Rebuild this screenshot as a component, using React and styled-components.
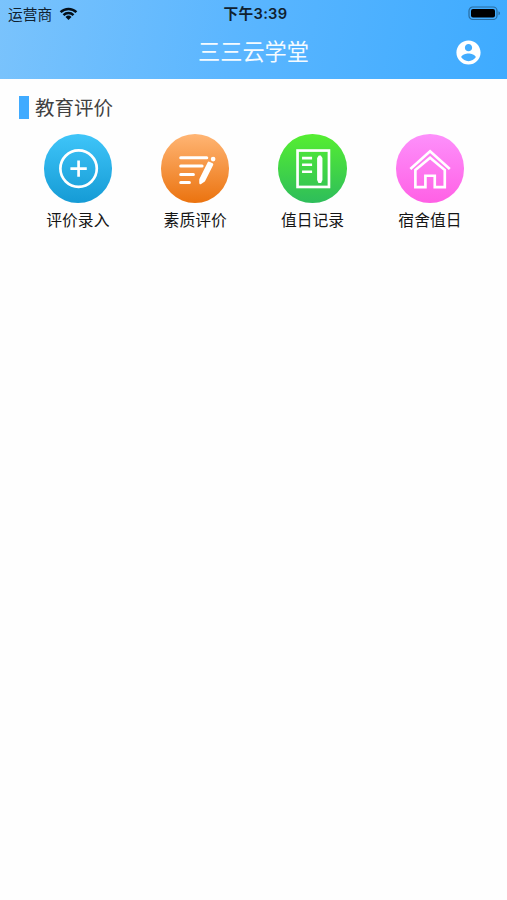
import React from 'react';
import styled, { createGlobalStyle } from 'styled-components';

const GlobalStyle = createGlobalStyle`
  * { box-sizing: border-box; }
  body {
    margin: 0;
    background: #fefefe;
    font-family: "Liberation Sans", "Noto Sans CJK SC", sans-serif;
  }
`;

const Screen = styled.main`
  width: 100%;
  height: 900px;
  overflow: hidden;
  background: #fefefe;
`;

const Header = styled.header`
  height: 79px;
  background: linear-gradient(100deg, #7ac3fc 0%, #5bb6ff 46%, #3eabff 100%);
`;

const StatusBar = styled.div`
  height: 27px;
  padding: 0 6px 0 8px;
  display: grid;
  grid-template-columns: 1fr auto 1fr;
  align-items: center;
  color: #10212f;
`;

const Carrier = styled.div`
  display: flex;
  align-items: center;
  gap: 7px;
  font: 400 14.7px/27px "Noto Sans CJK SC", sans-serif;
`;

const Clock = styled.time`
  padding: 2px 0 0 2px;
  font: 600 14.7px/25px Inter, "Noto Sans CJK SC", sans-serif;
  letter-spacing: 0.3px;
`;

const Battery = styled.svg`
  justify-self: end;
  display: block;
`;

const TitleBar = styled.div`
  height: 50px;
  padding: 0 26px;
  display: grid;
  grid-template-columns: 26px 1fr 26px;
  align-items: center;
`;

const Title = styled.h1`
  grid-column: 2;
  margin: 0;
  padding-bottom: 4px;
  text-align: center;
  color: #f5fbff;
  font: 400 22.2px/46px "Noto Sans CJK SC", sans-serif;
`;

const AccountIcon = styled.svg`
  width: 29px;
  height: 29px;
  justify-self: center;
`;

const SectionHeading = styled.h2`
  margin: 16px 0 0 19px;
  height: 24px;
  display: flex;
  align-items: center;
  gap: 6px;
  color: #414141;
  font: 400 19.5px/24px "Noto Sans CJK SC", sans-serif;

  &::before {
    content: "";
    width: 10px;
    height: 23px;
    background: #40abff;
  }
`;

const Menu = styled.nav`
  margin-top: 15px;
  padding: 0 18.4px 0 19.2px;
  display: grid;
  grid-template-columns: repeat(4, 1fr);
`;

const MenuItem = styled.div`
  display: flex;
  flex-direction: column;
  align-items: center;
`;

const Disc = styled.div`
  width: 68.5px;
  height: 68.5px;
  border-radius: 50%;
  background: linear-gradient(${(p) => p.$from}, ${(p) => p.$to});

  svg {
    display: block;
    width: 100%;
    height: 100%;
    fill: none;
    stroke: #fff;
    stroke-width: 8;
  }
`;

const Label = styled.span`
  margin-top: 5px;
  color: #151515;
  font: 400 15.8px/24px "Noto Sans CJK SC", sans-serif;
`;

const items = [
  {
    label: '评价录入', from: '#3fc5f9', to: '#159bd5',
    icon: (
      <>
        <circle cx="103.500" cy="103.500" r="54.500" />
        <path d="M79 103.500h49M103.500 79v49" />
      </>
    ),
  },
  {
    label: '素质评价', from: '#ffb574', to: '#eb730f',
    icon: (
      <>
        <path d="M59 71h78M59 96h64M59 121h38M59 145h26" strokeWidth="9" strokeLinecap="round" />
        <path d="M143 86L153 91L129 139L118 147L118 136Z" fill="#fff" strokeWidth="7" strokeLinejoin="round" />
        <circle cx="156" cy="75" r="7" fill="#fff" stroke="none" />
      </>
    ),
  },
  {
    label: '值日记录', from: '#55ee31', to: '#2ebd5b',
    icon: (
      <>
        <rect x="58.5" y="49.5" width="94" height="109" />
        <path d="M72 72h30M72 92h30M72 113h30" />
        <path d="M117 72l5-8h6l5 8v66l-4 9h-8l-4-9z" fill="#fff" stroke="none" />
      </>
    ),
  },
  {
    label: '宿舍值日', from: '#fd90fb', to: '#ff60e5',
    icon: (
      <>
        <path d="M43 105L102 52L161 105" />
        <path d="M58 108L102 71L146 108V159H116V125H88V159H58Z" />
      </>
    ),
  },
];

export default function App() {
  return (
    <>
      <GlobalStyle />
      <Screen>
        <Header>
          <StatusBar>
            <Carrier>
              运营商
              <svg width="19" height="13" viewBox="0 0 19 13" fill="none" stroke="#04101a" strokeWidth="2.5">
                <path d="M1.6 5.2a11.3 11.3 0 0 1 15.8 0M4.5 8.1a7.2 7.2 0 0 1 10 0" />
                <path d="M6.5 10a4.3 4.3 0 0 1 6 0l-3 3z" fill="#04101a" stroke="none" />
              </svg>
            </Carrier>
            <Clock>下午3:39</Clock>
            <Battery width="33" height="15" viewBox="0 0 33 15">
              <rect x="1" y="1" width="28" height="12.5" rx="3.8" fill="none" stroke="#296c9f" strokeWidth="1.2" />
              <rect x="3" y="3" width="24" height="8.5" rx="2" fill="#000" />
              <path d="M30.5 5.2c2 .8 2 3.3 0 4.1z" fill="#296c9f" />
            </Battery>
          </StatusBar>
          <TitleBar>
            <Title>三三云学堂</Title>
            <AccountIcon viewBox="0 0 24 24" fill="#fff">
              <path d="M12 2C6.48 2 2 6.48 2 12s4.48 10 10 10 10-4.48 10-10S17.520 2 12 2zm0 3c1.660 0 3 1.340 3 3s-1.340 3-3 3-3-1.340-3-3 1.340-3 3-3zm0 14.200c-2.500 0-4.710-1.280-6-3.220.03-1.990 4-3.080 6-3.080 1.990 0 5.970 1.090 6 3.080-1.290 1.940-3.500 3.220-6 3.220z" />
            </AccountIcon>
          </TitleBar>
        </Header>
        <SectionHeading>教育评价</SectionHeading>
        <Menu>
          {items.map((item) => (
            <MenuItem key={item.label}>
              <Disc $from={item.from} $to={item.to}>
                <svg viewBox="0 0 205 205">{item.icon}</svg>
              </Disc>
              <Label>{item.label}</Label>
            </MenuItem>
          ))}
        </Menu>
      </Screen>
    </>
  );
}
